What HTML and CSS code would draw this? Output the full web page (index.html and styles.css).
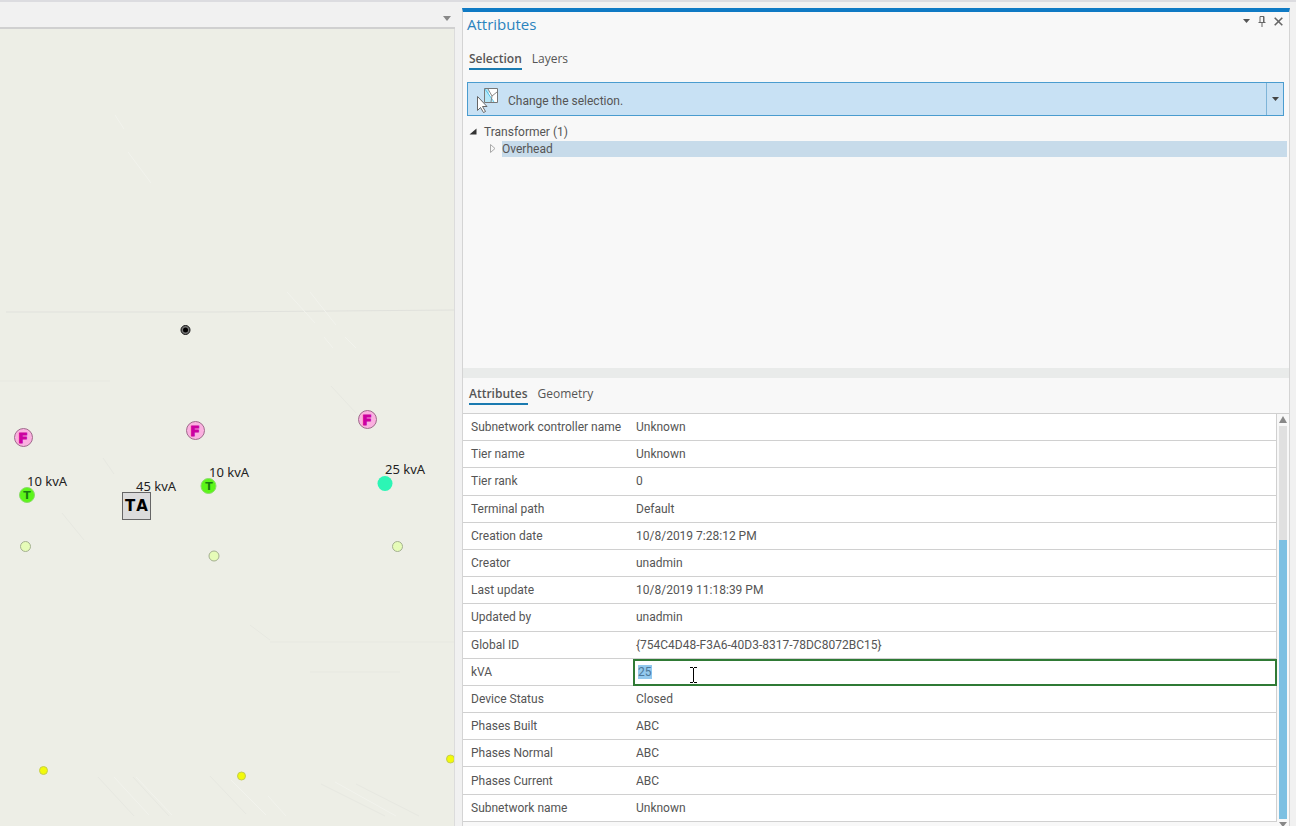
FILE: index.html
```html
<!DOCTYPE html>
<html lang="en">
<head>
	<meta charset="UTF-8">
	<meta name="viewport" content="width=device-width, initial-scale=1.0">
	<title>Attributes</title>

	<link rel="stylesheet" href="styles.css">

</head>
<body>
	<div class="app">

		<!-- MAP -->
		<div class="mapView">
			<div class="mapTabs">
				<button type="button" class="arrowButton" aria-label="Open views">
					<svg width="8" height="5" viewBox="0 0 8 5"><path d="M0 0h8L4 5z" fill="#888"/></svg>
				</button>
			</div>
			<div class="map">
				<svg class="mapCanvas" viewBox="0 29 455 797" preserveAspectRatio="xMinYMin slice">
					<g class="contours">
						<path d="M6 312H215L455 310"/>
						<path class="faint" d="M0 381H110M270 642H455M310 672H400"/>
						<path class="light" d="M115 115L124 129M128 152L151 183M287 292L315 323M310 292L336 325M324 337L333 348M345 337L356 348"/>
						<path class="faint" d="M331 386L356 413M103 458L114 474M62 513L84 540M250 625L270 640"/>
						<path class="faint" d="M98 777L134 816M133 777L169 816M210 776L246 814M321 784L385 816M356 784L419 816"/>
						<path class="light" d="M114 777L149 815M136 777L172 815M231 780L266 815M268 796L286 816M335 782L396 816"/>
					</g>

					<circle cx="185.500" cy="330" r="4.500" fill="#777" stroke="#111"/>
					<circle cx="185.500" cy="330" r="2.500" fill="#000"/>

					<g class="fuse">
						<circle cx="23.500" cy="437.500" r="9"/><text x="23" y="443">F</text>
						<circle cx="195.500" cy="430.500" r="9"/><text x="195" y="436">F</text>
						<circle cx="367.500" cy="419.500" r="9"/><text x="367" y="425">F</text>
					</g>

					<g class="transformer">
						<circle cx="27" cy="495" r="7.500"/><text x="27" y="499">T</text>
						<circle cx="208.500" cy="486" r="7.500"/><text x="209" y="490">T</text>
					</g>
					<circle cx="385" cy="483.500" r="7.500" fill="#2cf5b5"/>

					<rect x="122.500" y="492.500" width="28" height="27" fill="#dcdcdc" stroke="#666"/>
					<text class="bank" y="511"><tspan x="130">T</tspan><tspan x="142">A</tspan></text>

					<g class="mapLabel">
						<text x="27" y="486">10 kvA</text>
						<text x="136" y="491">45 kvA</text>
						<text x="209" y="477">10 kvA</text>
						<text x="385" y="474">25 kvA</text>
					</g>

					<g class="servicePoint">
						<circle cx="25.500" cy="546.500" r="5"/>
						<circle cx="214" cy="556" r="5"/>
						<circle cx="397.500" cy="546.500" r="5"/>
					</g>
					<g class="meter">
						<circle cx="43.500" cy="770.500" r="4"/>
						<circle cx="241.500" cy="776" r="4"/>
						<circle cx="450.500" cy="759" r="4"/>
					</g>
				</svg>
			</div>
		</div>

		<!-- ATTRIBUTES PANE -->
		<div class="pane">
			<div class="paneHeader">
				<h1>Attributes</h1>
				<div class="paneTools">
					<button type="button" aria-label="Pane menu">
						<svg width="7" height="4" viewBox="0 0 7 4"><path d="M0 0h7L3.500 4z" fill="#555"/></svg>
					</button>
					<button type="button" aria-label="Pin">
						<svg width="8" height="11" viewBox="0 0 8 11" fill="none" stroke="#666"><path d="M2 6V.5H6V6M5.500 1V6M.5 6.500H7.500M4 7V11"/></svg>
					</button>
					<button type="button" aria-label="Close">
						<svg width="9" height="9" viewBox="0 0 9 9" fill="none" stroke="#666" stroke-width="1.600"><path d="M.7.7L8.300 8.300M8.300.7L.7 8.300"/></svg>
					</button>
				</div>
			</div>

			<div class="tabs">
				<button type="button" class="active">Selection</button>
				<button type="button">Layers</button>
			</div>

			<div class="changeSelection">
				<button type="button" class="changeButton">
					<svg width="24" height="26" viewBox="0 0 24 26">
						<path d="M8.500.500h13v14h-13z" fill="#fff" stroke="#777"/>
						<path d="M9 1h4v5l4 8H9z" fill="#b5e6f8"/>
						<path d="M9 1L18 14" stroke="#53c3e8" fill="none"/>
						<path d="M12 1l4 7 5-4M16 8l-1 6" stroke="#888" fill="none"/>
						<path d="M1.500 8.500v14l3-3 3 5 2-1-3-5h4.500z" fill="#fff" stroke="#666"/>
					</svg>
					<span>Change the selection.</span>
				</button>
				<button type="button" class="changeMenu" aria-label="Selection options">
					<svg width="7" height="4" viewBox="0 0 7 4"><path d="M0 0h7L3.500 4z" fill="#444"/></svg>
				</button>
			</div>

			<ul class="tree">
				<li>
					<div class="treeRow">
						<button type="button" aria-label="Collapse Transformer">
							<svg width="8" height="8" viewBox="0 0 8 8"><path d="M7.500.5v6h-7z" fill="#333"/></svg>
						</button>
						<span>Transformer (1)</span>
					</div>
					<ul>
						<li class="treeRow">
							<button type="button" aria-label="Expand Overhead">
								<svg width="6" height="9" viewBox="0 0 6 9"><path d="M.5.5v8l4.500-4z" fill="none" stroke="#aaa"/></svg>
							</button>
							<span class="selected">Overhead</span>
						</li>
					</ul>
				</li>
			</ul>

			<div class="splitter"></div>

			<div class="tabs lower">
				<button type="button" class="active">Attributes</button>
				<button type="button">Geometry</button>
			</div>

			<div class="grid">
				<div class="tableWrap">
					<table>
						<tr><th scope="row">Subnetwork controller name</th><td>Unknown</td></tr>
						<tr><th scope="row">Tier name</th><td>Unknown</td></tr>
						<tr><th scope="row">Tier rank</th><td>0</td></tr>
						<tr><th scope="row">Terminal path</th><td>Default</td></tr>
						<tr><th scope="row">Creation date</th><td>10/8/2019 7:28:12 PM</td></tr>
						<tr><th scope="row">Creator</th><td>unadmin</td></tr>
						<tr><th scope="row">Last update</th><td>10/8/2019 11:18:39 PM</td></tr>
						<tr><th scope="row">Updated by</th><td>unadmin</td></tr>
						<tr><th scope="row">Global ID</th><td>{754C4D48-F3A6-40D3-8317-78DC8072BC15}</td></tr>
						<tr>
							<th scope="row"><label for="kva">kVA</label></th>
							<td class="editing">
								<input type="text" id="kva" value="25">
								<svg class="ibeam" width="7" height="16" viewBox="0 0 7 16"><path d="M0 .5h3M4 .5h3M3.500 1v14M0 15.500h3M4 15.500h3" fill="none" stroke="#000"/></svg>
							</td>
						</tr>
						<tr><th scope="row">Device Status</th><td>Closed</td></tr>
						<tr><th scope="row">Phases Built</th><td>ABC</td></tr>
						<tr><th scope="row">Phases Normal</th><td>ABC</td></tr>
						<tr><th scope="row">Phases Current</th><td>ABC</td></tr>
						<tr><th scope="row">Subnetwork name</th><td>Unknown</td></tr>
					</table>
				</div>
				<div class="scrollbar">
					<svg width="8" height="7" viewBox="0 0 8 7"><path d="M0 7h8L4 0z" fill="#888"/></svg>
					<div class="track"><div class="thumb"></div></div>
					<svg width="8" height="4" viewBox="0 0 8 4"><path d="M0 0h8L4 5z" fill="#888"/></svg>
				</div>
			</div>
		</div>
	</div>

	<!-- SCRIPT -->
	<script type="text/javascript">
		// start with the kVA value selected, ready to be typed over
		var kva = document.getElementById('kva');
		kva.focus();
		kva.select();
	</script>
</body>
</html>
```
FILE: styles.css
```css
* {
	box-sizing: border-box;
}

body {
	margin: 0;
	background-color: #f1f1f1;
	color: #555;
	font-family: Roboto, "Open Sans", sans-serif;
	font-size: 12px;
	line-height: 18px;
}

button {
	border: 0;
	padding: 0;
	background: none;
	color: inherit;
	font: inherit;
	cursor: pointer;
}

svg {
	display: block;
}

.app {
	display: grid;
	grid-template-columns: minmax(0, 455fr) minmax(0, 828fr);
	gap: 7px;
	height: 100vh;
	min-height: 780px;
	padding-right: 6px;
	border-top: 2px solid #dcdce0;
}

/* map */

.mapView {
	display: flex;
	flex-direction: column;
	min-height: 0;
}

.mapTabs {
	display: flex;
	justify-content: flex-end;
	align-items: center;
	height: 27px;
	padding: 8px 4px 0 0;
	border-bottom: 2px solid #d0d0d0;
}

.map {
	flex: 1;
	min-height: 0;
	overflow: hidden;
	background-color: #edeee6;
	border-right: 1px solid #dcdcdc;
}

.mapCanvas {
	width: 100%;
	height: 100%;
}

.contours path {
	fill: none;
	stroke: #e0e1dc;
}

.contours .faint {
	stroke: #e7e8e1;
}

.contours .light {
	stroke: #f2f3ed;
}

.fuse circle {
	fill: #fbb0e0;
	stroke: #a06a8c;
}

.fuse text,
.transformer text,
.bank {
	font-family: "DejaVu Sans", sans-serif;
	font-weight: bold;
	text-anchor: middle;
}

.fuse text {
	fill: #cc00a0;
	stroke: #cc00a0;
	font-size: 14px;
}

.transformer circle {
	fill: #5cf51a;
	stroke: #8bdc6a;
}

.transformer text {
	fill: #187c10;
	font-size: 11px;
}

.bank {
	fill: #000;
	font-size: 15px;
}

.mapLabel {
	fill: #222;
	font-family: "Noto Sans", sans-serif;
	font-size: 13px;
}

.servicePoint circle {
	fill: #e6fcb8;
	stroke: #a4b090;
}

.meter circle {
	fill: #f2fa0a;
	stroke: #c4cc50;
}

/* attributes pane */

.pane {
	display: flex;
	flex-direction: column;
	min-height: 0;
	margin-top: 6px;
	border: 1px solid #d4d4d4;
	border-top: 4px solid #0f7ac4;
	border-bottom: 0;
	background-color: #f8f8f8;
}

.paneHeader {
	display: flex;
	justify-content: space-between;
	height: 34px;
	padding: 0 6px 0 4px;
}

h1 {
	margin: 0;
	color: #2b83bd;
	font-family: "Open Sans", sans-serif;
	font-size: 15px;
	font-weight: normal;
	line-height: 24px;
}

.paneTools {
	display: flex;
	align-items: center;
	gap: 8px;
	height: 18px;
}

.tabs {
	display: flex;
	gap: 10px;
	height: 36px;
	padding: 4px 6px 0;
	font-family: "Open Sans", sans-serif;
}

.tabs button {
	height: 20px;
	border-bottom: 2px solid transparent;
}

.tabs .active {
	border-color: #1a7ab0;
	font-weight: 600;
}

.changeSelection {
	display: flex;
	height: 34px;
	margin: 0 5px 0 4px;
	border: 1px solid #4a9ccf;
	background-color: #c8e1f4;
}

.changeButton {
	display: flex;
	flex: 1;
	align-items: center;
	gap: 8px;
	padding: 3px 0 0 8px;
}

.changeMenu {
	display: flex;
	align-items: center;
	justify-content: center;
	width: 17px;
	border-left: 1px solid #7eb4d8;
}

.tree,
.tree ul {
	margin: 0;
	padding: 0;
	list-style: none;
}

.tree {
	flex: 1;
	min-height: 60px;
	padding: 7px 2px 0 5px;
}

.tree ul {
	padding-left: 20px;
}

.treeRow {
	display: flex;
	align-items: center;
	height: 17px;
}

.treeRow button {
	display: flex;
	justify-content: center;
	width: 10px;
	margin-right: 6px;
}

.treeRow .selected {
	flex: 1;
	height: 16px;
	margin-left: -2px;
	background-color: #c7dbea;
	line-height: 16px;
}

.splitter {
	height: 10px;
	background-color: #e9ebea;
}

.lower {
	height: 35px;
	padding-top: 7px;
}

/* attribute table */

.grid {
	display: flex;
	height: 413px;
	border-top: 1px solid #d0d0d0;
}

.tableWrap {
	flex: 1;
	padding-bottom: 4px;
	min-width: 0;
}

table {
	width: 100%;
	height: 100%;
	border-spacing: 0;
	background-color: #fff;
	table-layout: fixed;
}

th,
td {
	height: 27px;
	padding: 0;
	border-bottom: 1px solid #d0d0d0;
	text-align: left;
	font-weight: normal;
}

th {
	width: 170px;
	padding-left: 8px;
}

td {
	padding-left: 3px;
	border-right: 1px solid #d0d0d0;
}

.editing {
	position: relative;
	padding: 0;
	border: 0;
}

.editing input {
	display: block;
	width: 100%;
	height: 27px;
	padding: 0 3px;
	border: 2px solid #2f7a35;
	outline: 0;
	background-color: #fff;
	color: #555;
	font: inherit;
}

.editing input::selection {
	background-color: #93c9ee;
	color: #4d789a;
}

.ibeam {
	position: absolute;
	top: 8px;
	left: 57px;
}

.scrollbar {
	display: flex;
	flex-direction: column;
	align-items: center;
	width: 12px;
	padding-top: 2px;
}

.track {
	display: flex;
	flex: 1;
	align-items: flex-end;
	width: 8px;
	margin: 3px 0;
	background-color: #e0e0e0;
}

.thumb {
	width: 8px;
	height: 71%;
	background-color: #7dc0e2;
}
```
